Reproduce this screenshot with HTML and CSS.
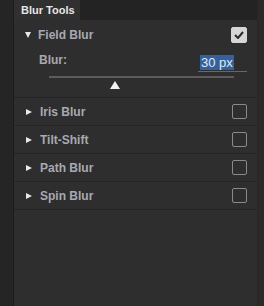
FILE: index.html
```html
<!DOCTYPE html>
<html lang="en">
<head>
    <meta charset="UTF-8">
    <title>Blur Tools</title>
    <link rel="stylesheet" href="styles.css">
</head>
<body>

<div class="frame">
    <div class="gutter"></div>

    <div class="panel">
        <div class="tabbar">
            <div class="tab">Blur Tools</div>
        </div>

        <!-- Field blur, open -->
        <div class="section open">
            <div class="head">
                <span class="arrow down"></span>
                <span class="name">Field Blur</span>
                <span class="check on">
                    <svg width="10" height="8" viewBox="0 0 10 8"><path d="M1 4 L4 7 L9 1" fill="none" stroke="#2a2a2a" stroke-width="2"/></svg>
                </span>
            </div>
            <div class="param">
                <span class="label">Blur:</span>
                <span class="value"><span class="sel">30 px</span></span>
            </div>
            <div class="slider">
                <div class="track"></div>
                <div class="thumb" style="left: 61px"></div>
            </div>
        </div>

        <div class="section">
            <div class="head">
                <span class="arrow"></span>
                <span class="name">Iris Blur</span>
                <span class="check"></span>
            </div>
        </div>
        <div class="section">
            <div class="head">
                <span class="arrow"></span>
                <span class="name">Tilt-Shift</span>
                <span class="check"></span>
            </div>
        </div>
        <div class="section">
            <div class="head">
                <span class="arrow"></span>
                <span class="name">Path Blur</span>
                <span class="check"></span>
            </div>
        </div>
        <div class="section">
            <div class="head">
                <span class="arrow"></span>
                <span class="name">Spin Blur</span>
                <span class="check"></span>
            </div>
        </div>
    </div>

    <div class="edge"></div>
</div>

</body>
</html>
```

FILE: styles.css
```css
html, body{
    margin: 0;
    height: 100%;
    background: #2d2d2d;
    font-family: "Liberation Sans", Arial, sans-serif;
}

.frame{
    display: flex;
    height: 306px;
}

.gutter{
    width: 13px;
    background: #252525;
    border-right: 1px solid #1c1c1c;
}

.edge{
    width: 6px;
    background: #2a2a2a;
    border-left: 1px solid #262626;
}

.panel{
    flex: 1;
    background: #2e2e2e;
}

.tabbar{
    height: 20px;
    background: #232323;
    display: flex;
}

.tab{
    width: 66px;
    background: #303030;
    color: #e6e6e6;
    font-size: 11px;
    font-weight: bold;
    line-height: 20px;
    padding-left: 7px;
    box-sizing: border-box;
}

.section{
    border-bottom: 1px solid #252525;
}

.head{
    height: 27px;
    display: flex;
    align-items: center;
    padding: 0 10px 0 11px;
}

.open .head{
    height: 30px;
}

.arrow{
    width: 0;
    height: 0;
    border-top: 3.5px solid transparent;
    border-bottom: 3.5px solid transparent;
    border-left: 6px solid #e8e8e8;
    margin-right: 8px;
    margin-left: 1px;
}

.arrow.down{
    border-left: 3.5px solid transparent;
    border-right: 3.5px solid transparent;
    border-top: 6px solid #e8e8e8;
    border-bottom: 0;
    margin-right: 7px;
    margin-left: 0;
}

.name{
    flex: 1;
    color: #a9a9ae;
    font-size: 12px;
    font-weight: bold;
}

.check{
    width: 13px;
    height: 13px;
    border: 1px solid #8a8a8a;
    border-radius: 2px;
    box-sizing: content-box;
    display: flex;
    align-items: center;
    justify-content: center;
}

.check.on{
    background: #d6d6d6;
    border-color: #d6d6d6;
    width: 14px;
    height: 14px;
}

.param{
    height: 20px;
    display: flex;
    align-items: center;
    padding: 0 10px 0 25px;
}

.label{
    flex: 1;
    color: #a9a9ae;
    font-size: 12px;
    font-weight: bold;
}

.value{
    width: 47px;
    border-bottom: 1px solid #3d6fa8;
    padding: 0 0 0 2px;
    margin-top: 4px;
}

.sel{
    background: #2e62a4;
    color: #e8e8e8;
    font-size: 13px;
    padding: 0 1px;
}

.slider{
    position: relative;
    height: 27px;
    padding-top: 6px;
    box-sizing: border-box;
    margin-left: 35px;
    width: 185px;
}

.track{
    height: 2px;
    background: #5c5c5c;
}

.thumb{
    position: absolute;
    top: 11px;
    width: 0;
    height: 0;
    border-left: 5px solid transparent;
    border-right: 5px solid transparent;
    border-bottom: 8px solid #f2f2f2;
}
```
